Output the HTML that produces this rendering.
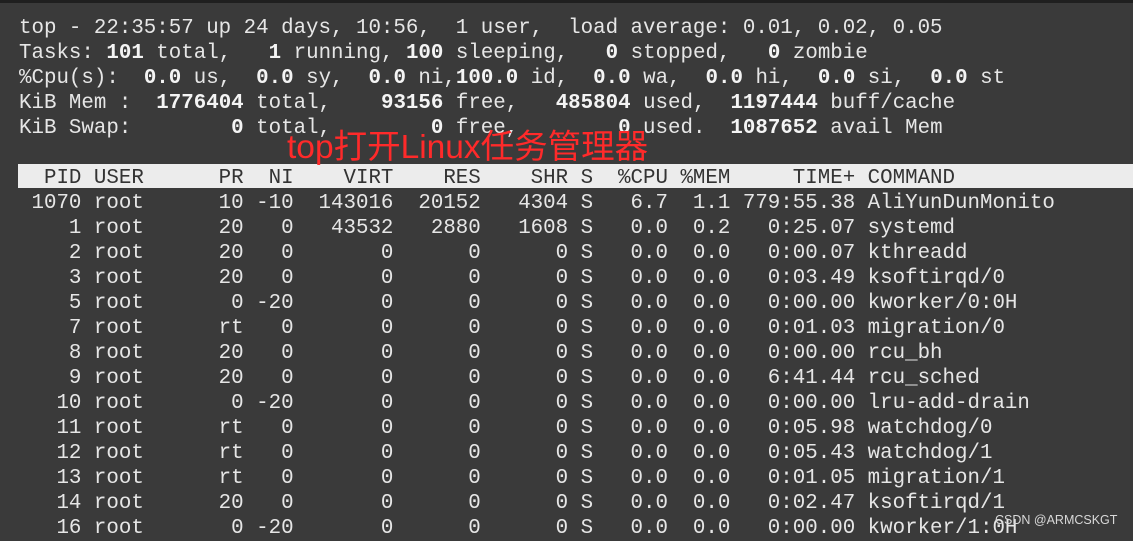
<!DOCTYPE html>
<html><head><meta charset="utf-8"><style>
html,body{margin:0;padding:0;}
body{width:1133px;height:537px;background:#3a3a3a;position:relative;overflow:hidden;}
.topbar{position:absolute;left:0;top:0;width:1133px;height:3px;background:#1f1f1f;}
pre{position:absolute;left:19px;top:16px;margin:0;font-family:"Liberation Mono",monospace;font-size:20.8px;line-height:25px;color:#e6e6e6;white-space:pre;}
b{font-weight:bold;color:#f4f4f4;}
.hdr{position:absolute;left:18px;top:164px;width:1115px;height:24px;background:#ececec;}
.h{color:#333;}
.red{position:absolute;left:287px;top:128px;font-family:"Liberation Sans","Noto Sans CJK SC",sans-serif;font-size:33.5px;color:#ff2a2a;line-height:40px;}
.wm{position:absolute;left:995px;top:513px;font-family:"Liberation Sans",sans-serif;font-size:12.5px;color:#d8d8d8;}
</style></head><body>
<div class="topbar"></div>
<div class="hdr"></div>
<pre>top - 22:35:57 up 24 days, 10:56,  1 user,  load average: 0.01, 0.02, 0.05
Tasks: <b>101</b> total,   <b>1</b> running, <b>100</b> sleeping,   <b>0</b> stopped,   <b>0</b> zombie
%Cpu(s):  <b>0.0</b> us,  <b>0.0</b> sy,  <b>0.0</b> ni,<b>100.0</b> id,  <b>0.0</b> wa,  <b>0.0</b> hi,  <b>0.0</b> si,  <b>0.0</b> st
KiB Mem :  <b>1776404</b> total,    <b>93156</b> free,   <b>485804</b> used,  <b>1197444</b> buff/cache
KiB Swap:        <b>0</b> total,        <b>0</b> free,        <b>0</b> used.  <b>1087652</b> avail Mem

<span class="h">  PID USER      PR  NI    VIRT    RES    SHR S  %CPU %MEM     TIME+ COMMAND</span>
 1070 root      10 -10  143016  20152   4304 S   6.7  1.1 779:55.38 AliYunDunMonito
    1 root      20   0   43532   2880   1608 S   0.0  0.2   0:25.07 systemd
    2 root      20   0       0      0      0 S   0.0  0.0   0:00.07 kthreadd
    3 root      20   0       0      0      0 S   0.0  0.0   0:03.49 ksoftirqd/0
    5 root       0 -20       0      0      0 S   0.0  0.0   0:00.00 kworker/0:0H
    7 root      rt   0       0      0      0 S   0.0  0.0   0:01.03 migration/0
    8 root      20   0       0      0      0 S   0.0  0.0   0:00.00 rcu_bh
    9 root      20   0       0      0      0 S   0.0  0.0   6:41.44 rcu_sched
   10 root       0 -20       0      0      0 S   0.0  0.0   0:00.00 lru-add-drain
   11 root      rt   0       0      0      0 S   0.0  0.0   0:05.98 watchdog/0
   12 root      rt   0       0      0      0 S   0.0  0.0   0:05.43 watchdog/1
   13 root      rt   0       0      0      0 S   0.0  0.0   0:01.05 migration/1
   14 root      20   0       0      0      0 S   0.0  0.0   0:02.47 ksoftirqd/1
   16 root       0 -20       0      0      0 S   0.0  0.0   0:00.00 kworker/1:0H</pre>
<div class="red">top打开Linux任务管理器</div>
<div class="wm">CSDN @ARMCSKGT</div>
</body></html>
